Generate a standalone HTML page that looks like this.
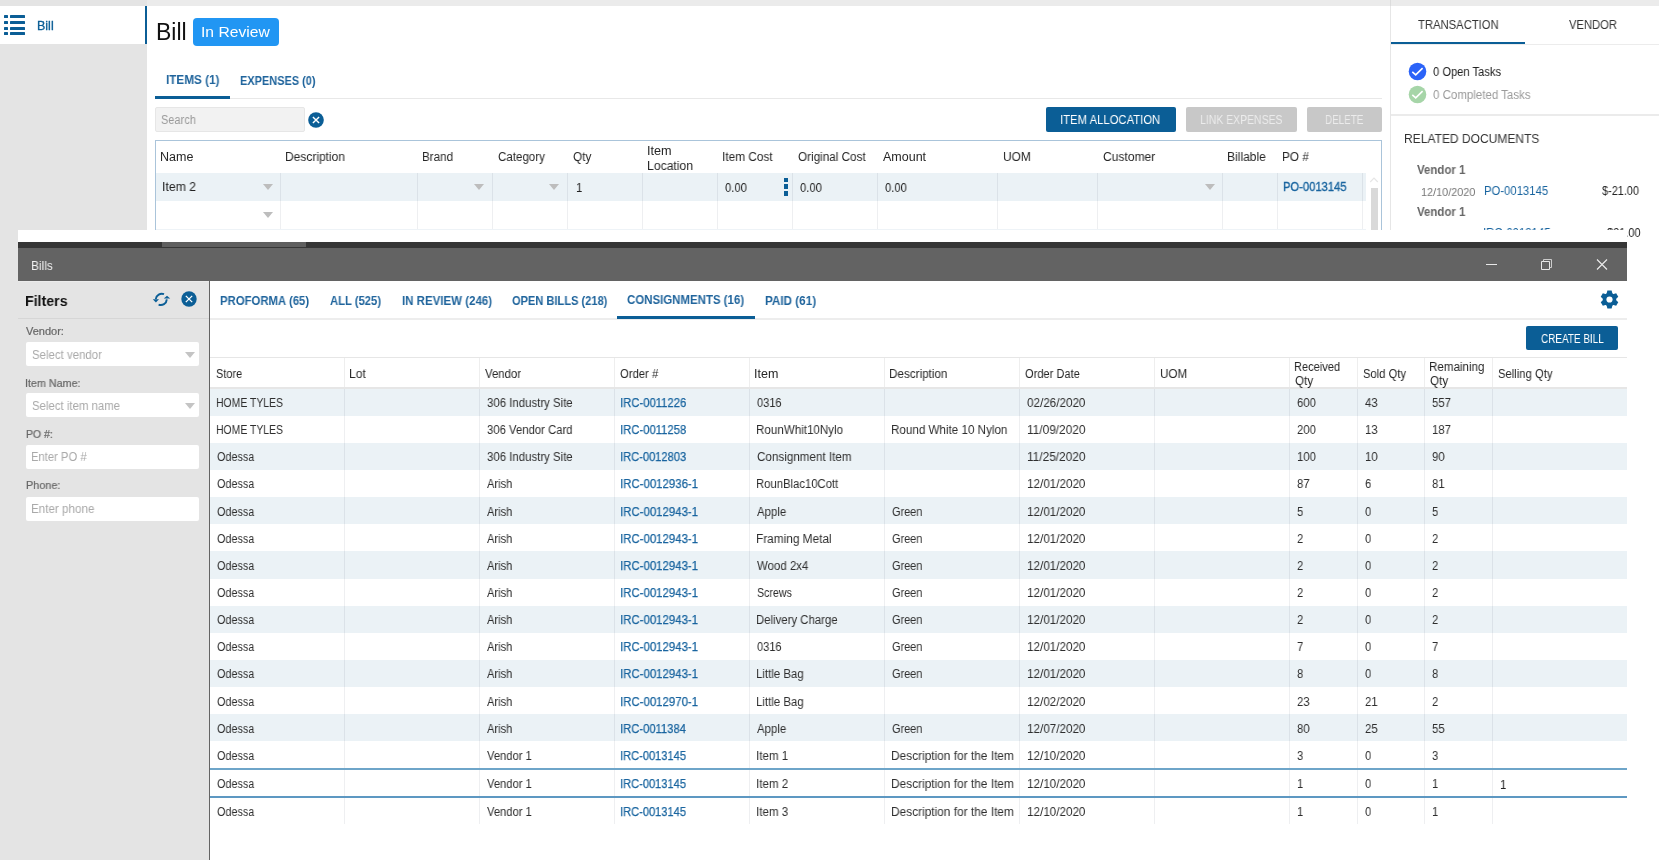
<!DOCTYPE html>
<html><head><meta charset="utf-8"><style>
html,body{margin:0;padding:0;width:1659px;height:860px;overflow:hidden;background:#fff;position:relative}
body{font-family:"Liberation Sans",sans-serif}
.t{position:absolute;white-space:nowrap;transform-origin:0 0;will-change:transform}
.r{position:absolute}
</style></head><body>
<div class="r" style="left:0px;top:0px;width:1659px;height:6px;background:#ebebeb;"></div>
<div class="r" style="left:0px;top:0px;width:147px;height:6px;background:#e4e4e4;"></div>
<div class="r" style="left:0px;top:44px;width:147px;height:816px;background:#e4e4e4;"></div>
<div class="r" style="left:0px;top:6px;width:145px;height:38px;background:#ffffff;"></div>
<div class="r" style="left:145px;top:6px;width:2px;height:38px;background:#0b5e96;"></div>
<div class="r" style="left:4px;top:15px;width:3.5px;height:3px;background:#0b5e96;border-radius:0.5px"></div>
<div class="r" style="left:10px;top:15px;width:14.7px;height:3px;background:#0b5e96;border-radius:0.5px"></div>
<div class="r" style="left:4px;top:21px;width:3.5px;height:3px;background:#0b5e96;border-radius:0.5px"></div>
<div class="r" style="left:10px;top:21px;width:14.7px;height:3px;background:#0b5e96;border-radius:0.5px"></div>
<div class="r" style="left:4px;top:26.5px;width:3.5px;height:3.0px;background:#0b5e96;border-radius:0.5px"></div>
<div class="r" style="left:10px;top:26.5px;width:14.7px;height:3.0px;background:#0b5e96;border-radius:0.5px"></div>
<div class="r" style="left:4px;top:32px;width:3.5px;height:3px;background:#0b5e96;border-radius:0.5px"></div>
<div class="r" style="left:10px;top:32px;width:14.7px;height:3px;background:#0b5e96;border-radius:0.5px"></div>
<div class="t" style="left:36.83px;top:20.22px;font-size:12.5px;line-height:12.5px;font-weight:normal;color:#0b5e96;transform:scaleX(0.9737);-webkit-text-stroke:0.3px #0b5e96">Bill</div>
<div class="t" style="left:155.70px;top:21.03px;font-size:23px;line-height:23px;font-weight:normal;color:#111;">Bill</div>
<div class="r" style="left:193px;top:18px;width:86px;height:28px;background:#2196f3;border-radius:4px"></div>
<div class="t" style="left:200.88px;top:23.85px;font-size:15.3px;line-height:15.3px;font-weight:normal;color:#fff;transform:scaleX(1.0236);">In Review</div>
<div class="t" style="left:165.70px;top:74.16px;font-size:12.8px;line-height:12.8px;font-weight:bold;color:#1f649c;transform:scaleX(0.9167);">ITEMS (1)</div>
<div class="t" style="left:240.00px;top:74.84px;font-size:12px;line-height:12px;font-weight:bold;color:#1f649c;transform:scaleX(0.9130);">EXPENSES (0)</div>
<div class="r" style="left:155px;top:98px;width:1227px;height:1px;background:#e8e8e8;"></div>
<div class="r" style="left:155px;top:96px;width:75px;height:3px;background:#0b5e96;"></div>
<div class="r" style="left:155px;top:107px;width:150px;height:25px;background:#f2f2f2;box-sizing:border-box;border:1px solid #e6e6e6;border-radius:2px"></div>
<div class="t" style="left:161.20px;top:113.52px;font-size:12.5px;line-height:12.5px;font-weight:normal;color:#9a9a9a;transform:scaleX(0.8801);">Search</div>
<svg class="r" style="left:308px;top:112px" width="16" height="16" viewBox="0 0 16 16"><circle cx="8" cy="8" r="7.8" fill="#0b5e96"/><path d="M4.9 4.9L11.1 11.1M11.1 4.9L4.9 11.1" stroke="#fff" stroke-width="1.4"/></svg>
<div class="r" style="left:1046px;top:107px;width:130px;height:25px;background:#0b5e96;border-radius:2px"></div>
<div class="t" style="left:1060.20px;top:113.62px;font-size:12.5px;line-height:12.5px;font-weight:normal;color:#fff;transform:scaleX(0.9036);">ITEM ALLOCATION</div>
<div class="r" style="left:1186px;top:107px;width:111px;height:25px;background:#c8c8c8;border-radius:2px"></div>
<div class="t" style="left:1199.86px;top:113.62px;font-size:12.5px;line-height:12.5px;font-weight:normal;color:#ececec;transform:scaleX(0.8365);">LINK EXPENSES</div>
<div class="r" style="left:1307px;top:107px;width:75px;height:25px;background:#c8c8c8;border-radius:2px"></div>
<div class="t" style="left:1325.41px;top:113.62px;font-size:12.5px;line-height:12.5px;font-weight:normal;color:#ececec;transform:scaleX(0.7888);">DELETE</div>
<div class="r" style="left:155px;top:140px;width:1227px;height:720px;background:#ffffff;box-sizing:border-box;border:1px solid #aac4da"></div>
<div class="r" style="left:156px;top:173px;width:1210px;height:28px;background:#ebf2f6;"></div>
<div class="r" style="left:280px;top:173px;width:1px;height:57px;background:rgba(0,20,40,0.065);"></div>
<div class="r" style="left:417px;top:173px;width:1px;height:57px;background:rgba(0,20,40,0.065);"></div>
<div class="r" style="left:492px;top:173px;width:1px;height:57px;background:rgba(0,20,40,0.065);"></div>
<div class="r" style="left:567px;top:173px;width:1px;height:57px;background:rgba(0,20,40,0.065);"></div>
<div class="r" style="left:642px;top:173px;width:1px;height:57px;background:rgba(0,20,40,0.065);"></div>
<div class="r" style="left:717px;top:173px;width:1px;height:57px;background:rgba(0,20,40,0.065);"></div>
<div class="r" style="left:792px;top:173px;width:1px;height:57px;background:rgba(0,20,40,0.065);"></div>
<div class="r" style="left:877px;top:173px;width:1px;height:57px;background:rgba(0,20,40,0.065);"></div>
<div class="r" style="left:997px;top:173px;width:1px;height:57px;background:rgba(0,20,40,0.065);"></div>
<div class="r" style="left:1097px;top:173px;width:1px;height:57px;background:rgba(0,20,40,0.065);"></div>
<div class="r" style="left:1222px;top:173px;width:1px;height:57px;background:rgba(0,20,40,0.065);"></div>
<div class="r" style="left:1277px;top:173px;width:1px;height:57px;background:rgba(0,20,40,0.065);"></div>
<div class="r" style="left:1362px;top:173px;width:1px;height:57px;background:rgba(0,20,40,0.065);"></div>
<div class="t" style="left:160.01px;top:150.92px;font-size:12.5px;line-height:12.5px;font-weight:normal;color:#262626;transform:scaleX(0.9879);">Name</div>
<div class="t" style="left:285.24px;top:150.92px;font-size:12.5px;line-height:12.5px;font-weight:normal;color:#262626;transform:scaleX(0.9598);">Description</div>
<div class="t" style="left:422.47px;top:150.92px;font-size:12.5px;line-height:12.5px;font-weight:normal;color:#262626;transform:scaleX(0.9289);">Brand</div>
<div class="t" style="left:498.10px;top:150.92px;font-size:12.5px;line-height:12.5px;font-weight:normal;color:#262626;transform:scaleX(0.9248);">Category</div>
<div class="t" style="left:572.80px;top:150.92px;font-size:12.5px;line-height:12.5px;font-weight:normal;color:#262626;transform:scaleX(0.9408);">Qty</div>
<div class="t" style="left:722.25px;top:150.92px;font-size:12.5px;line-height:12.5px;font-weight:normal;color:#262626;transform:scaleX(0.9470);">Item Cost</div>
<div class="t" style="left:798.00px;top:150.92px;font-size:12.5px;line-height:12.5px;font-weight:normal;color:#262626;transform:scaleX(0.9371);">Original Cost</div>
<div class="t" style="left:883.20px;top:150.92px;font-size:12.5px;line-height:12.5px;font-weight:normal;color:#262626;transform:scaleX(0.9953);">Amount</div>
<div class="t" style="left:1003.30px;top:150.92px;font-size:12.5px;line-height:12.5px;font-weight:normal;color:#262626;transform:scaleX(0.9530);">UOM</div>
<div class="t" style="left:1103.00px;top:150.92px;font-size:12.5px;line-height:12.5px;font-weight:normal;color:#262626;transform:scaleX(0.9645);">Customer</div>
<div class="t" style="left:1226.83px;top:150.92px;font-size:12.5px;line-height:12.5px;font-weight:normal;color:#262626;transform:scaleX(0.9657);">Billable</div>
<div class="t" style="left:1282.26px;top:150.92px;font-size:12.5px;line-height:12.5px;font-weight:normal;color:#262626;transform:scaleX(0.9443);">PO #</div>
<div class="t" style="left:647.39px;top:145.42px;font-size:12.5px;line-height:12.5px;font-weight:normal;color:#262626;transform:scaleX(1.0132);">Item</div>
<div class="t" style="left:647.42px;top:159.62px;font-size:12.5px;line-height:12.5px;font-weight:normal;color:#262626;transform:scaleX(0.9761);">Location</div>
<div class="t" style="left:161.72px;top:181.42px;font-size:12.5px;line-height:12.5px;font-weight:normal;color:#222;transform:scaleX(0.9798);">Item 2</div>
<div class="r" style="left:263px;top:184.0px;width:0;height:0;border-left:5px solid transparent;border-right:5px solid transparent;border-top:6px solid #bdbdbd"></div>
<div class="r" style="left:474px;top:184.0px;width:0;height:0;border-left:5px solid transparent;border-right:5px solid transparent;border-top:6px solid #bdbdbd"></div>
<div class="r" style="left:549px;top:184.0px;width:0;height:0;border-left:5px solid transparent;border-right:5px solid transparent;border-top:6px solid #bdbdbd"></div>
<div class="r" style="left:1205px;top:184.0px;width:0;height:0;border-left:5px solid transparent;border-right:5px solid transparent;border-top:6px solid #bdbdbd"></div>
<div class="r" style="left:263px;top:212.0px;width:0;height:0;border-left:5px solid transparent;border-right:5px solid transparent;border-top:6px solid #bdbdbd"></div>
<div class="t" style="left:575.80px;top:182.42px;font-size:12.5px;line-height:12.5px;font-weight:normal;color:#222;transform:scaleX(0.9200);">1</div>
<div class="t" style="left:725.10px;top:182.42px;font-size:12.5px;line-height:12.5px;font-weight:normal;color:#222;transform:scaleX(0.8943);">0.00</div>
<div class="r" style="left:784px;top:177.5px;width:4.2999999999999545px;height:4.5px;background:#0b5e96;"></div>
<div class="r" style="left:784px;top:184.3px;width:4.2999999999999545px;height:4.299999999999983px;background:#0b5e96;"></div>
<div class="r" style="left:784px;top:191px;width:4.2999999999999545px;height:4.599999999999994px;background:#0b5e96;"></div>
<div class="t" style="left:799.70px;top:182.42px;font-size:12.5px;line-height:12.5px;font-weight:normal;color:#222;transform:scaleX(0.8943);">0.00</div>
<div class="t" style="left:885.00px;top:182.42px;font-size:12.5px;line-height:12.5px;font-weight:normal;color:#222;transform:scaleX(0.8902);">0.00</div>
<div class="t" style="left:1282.80px;top:180.72px;font-size:12.5px;line-height:12.5px;font-weight:normal;color:#18649f;transform:scaleX(0.8951);-webkit-text-stroke:0.35px #18649f">PO-0013145</div>
<div class="r" style="left:1366px;top:173px;width:15px;height:57px;background:#ffffff;"></div>
<div class="r" style="left:156px;top:229px;width:1210px;height:1px;background:#eef3f7;"></div>
<svg class="r" style="left:1369px;top:176px" width="10" height="7" viewBox="0 0 10 7"><path d="M1.2 6L5 2.2L8.8 6" stroke="#e6e6e6" stroke-width="1.2" fill="none"/></svg>
<div class="r" style="left:1371px;top:188px;width:7px;height:42px;background:#d9d9d9;"></div>
<div class="r" style="left:1390px;top:0px;width:1px;height:6px;background:#dcdcdc;"></div>
<div class="r" style="left:1390px;top:6px;width:1px;height:224px;background:#e6e6e6;"></div>
<div class="t" style="left:1418.00px;top:19.02px;font-size:12.5px;line-height:12.5px;font-weight:normal;color:#333;transform:scaleX(0.9011);">TRANSACTION</div>
<div class="t" style="left:1568.90px;top:19.02px;font-size:12.5px;line-height:12.5px;font-weight:normal;color:#333;transform:scaleX(0.8961);">VENDOR</div>
<div class="r" style="left:1391px;top:44px;width:268px;height:1px;background:#ececec;"></div>
<div class="r" style="left:1391px;top:42px;width:134px;height:2px;background:#0b5e96;"></div>
<svg class="r" style="left:1408px;top:62px" width="19" height="19" viewBox="0 0 19 19"><circle cx="9.5" cy="9.5" r="8.8" fill="#2b63f8"/><path d="M4.3 9.9L7.7 12.8L14.6 6.2" stroke="#fff" stroke-width="1.6" fill="none"/></svg>
<svg class="r" style="left:1408px;top:85px" width="19" height="19" viewBox="0 0 19 19"><circle cx="9.5" cy="9.5" r="8.8" fill="#a6d5a8"/><path d="M4.3 9.9L7.7 12.8L14.6 6.2" stroke="#fff" stroke-width="1.6" fill="none"/></svg>
<div class="t" style="left:1433.00px;top:65.62px;font-size:12.5px;line-height:12.5px;font-weight:normal;color:#222;transform:scaleX(0.8926);">0 Open Tasks</div>
<div class="t" style="left:1433.00px;top:88.92px;font-size:12.5px;line-height:12.5px;font-weight:normal;color:#9a9a9a;transform:scaleX(0.9203);">0 Completed Tasks</div>
<div class="r" style="left:1391px;top:114px;width:268px;height:2px;background:#ebebeb;"></div>
<div class="t" style="left:1403.61px;top:133.17px;font-size:12.2px;line-height:12.2px;font-weight:normal;color:#333;transform:scaleX(0.9867);">RELATED DOCUMENTS</div>
<div class="t" style="left:1417.20px;top:163.84px;font-size:12px;line-height:12px;font-weight:bold;color:#666;transform:scaleX(0.9547);">Vendor 1</div>
<div class="t" style="left:1420.80px;top:186.30px;font-size:11.7px;line-height:11.7px;font-weight:normal;color:#777;transform:scaleX(0.9289);">12/10/2020</div>
<div class="t" style="left:1483.70px;top:185.24px;font-size:12px;line-height:12px;font-weight:normal;color:#18649f;transform:scaleX(0.9418);">PO-0013145</div>
<div class="t" style="left:1602.40px;top:185.24px;font-size:12px;line-height:12px;font-weight:normal;color:#222;transform:scaleX(0.9092);">$-21.00</div>
<div class="t" style="left:1417.20px;top:205.54px;font-size:12px;line-height:12px;font-weight:bold;color:#666;transform:scaleX(0.9547);">Vendor 1</div>
<div class="t" style="left:1482.75px;top:227.34px;font-size:12px;line-height:12px;font-weight:normal;color:#18649f;transform:scaleX(0.9460);">IRC-0013145</div>
<div class="t" style="left:1606.60px;top:226.84px;font-size:12px;line-height:12px;font-weight:normal;color:#222;transform:scaleX(0.9160);">$21.00</div>
<div class="r" style="left:18px;top:230px;width:1609px;height:12px;background:#ffffff;"></div>
<div class="r" style="left:0px;top:242px;width:18px;height:618px;background:#e4e4e4;"></div>
<div class="r" style="left:18px;top:242px;width:1609px;height:6px;background:#363636;"></div>
<div class="r" style="left:162px;top:242px;width:144px;height:5px;background:#5f5f5f;"></div>
<div class="r" style="left:18px;top:248px;width:1609px;height:33px;background:#636363;"></div>
<div class="t" style="left:31.38px;top:259.20px;font-size:13px;line-height:13px;font-weight:normal;color:#f2f2f2;transform:scaleX(0.9171);">Bills</div>
<div class="r" style="left:1486px;top:264px;width:11px;height:1px;background:#e8e8e8;"></div>
<svg class="r" style="left:1540px;top:258px" width="14" height="13" viewBox="0 0 14 13"><path d="M1.5 3.5H9.5V11.5H1.5Z" stroke="#e8e8e8" stroke-width="1" fill="none"/><path d="M3.5 3.5V1.5H11.5V9.5H9.5" stroke="#d8d8d8" stroke-width="0.9" fill="none"/></svg>
<svg class="r" style="left:1596px;top:259px" width="12" height="11" viewBox="0 0 12 11"><path d="M1 0.5L11 10.5M11 0.5L1 10.5" stroke="#ececec" stroke-width="1.1"/></svg>
<div class="r" style="left:18px;top:281px;width:1609px;height:579px;background:#ffffff;"></div>
<div class="r" style="left:0px;top:281px;width:209px;height:579px;background:#e4e4e4;"></div>
<div class="r" style="left:18px;top:281px;width:191px;height:1px;background:#ebebeb;"></div>
<div class="r" style="left:209px;top:281px;width:1px;height:579px;background:#646464;"></div>
<div class="t" style="left:25.05px;top:292.60px;font-size:15px;line-height:15px;font-weight:bold;color:#111;transform:scaleX(0.9457);">Filters</div>
<svg class="r" style="left:148px;top:286px" width="26" height="22" viewBox="0 0 26 22"><g fill="none" stroke="#0b5e96" stroke-width="1.9"><path d="M16 8.2A6 6 0 0 0 7.8 13"/><path d="M10.6 18.6A6 6 0 0 0 18.8 13.4"/></g><g fill="#0b5e96"><path d="M4.8 13.2H11L7.9 16.4Z"/><path d="M15.8 12.6H22.2L19 9.8Z"/></g></svg>
<svg class="r" style="left:180.7px;top:291.2px" width="16" height="16" viewBox="0 0 16 16"><circle cx="8" cy="8" r="7.7" fill="#0b5e96"/><path d="M4.8 4.9L11.2 11.1M11.2 4.9L4.8 11.1" stroke="#fff" stroke-width="1.3"/></svg>
<div class="r" style="left:18px;top:318px;width:191px;height:1px;background:#d6d6d6;"></div>
<div class="t" style="left:26.00px;top:325.89px;font-size:11px;line-height:11px;font-weight:normal;color:#666;-webkit-text-stroke:0.2px #666">Vendor:</div>
<div class="r" style="left:26px;top:342px;width:173px;height:24px;background:#ffffff;border-radius:2px"></div>
<div class="t" style="left:31.50px;top:348.52px;font-size:12.5px;line-height:12.5px;font-weight:normal;color:#a9a9a9;transform:scaleX(0.9151);">Select vendor</div>
<div class="r" style="left:185px;top:352.0px;width:0;height:0;border-left:5px solid transparent;border-right:5px solid transparent;border-top:6px solid #c4c4c4"></div>
<div class="t" style="left:25.02px;top:377.69px;font-size:11px;line-height:11px;font-weight:normal;color:#666;transform:scaleX(0.9751);-webkit-text-stroke:0.2px #666">Item Name:</div>
<div class="r" style="left:26px;top:393px;width:173px;height:24px;background:#ffffff;border-radius:2px"></div>
<div class="t" style="left:31.50px;top:399.72px;font-size:12.5px;line-height:12.5px;font-weight:normal;color:#a9a9a9;transform:scaleX(0.9118);">Select item name</div>
<div class="r" style="left:185px;top:403.0px;width:0;height:0;border-left:5px solid transparent;border-right:5px solid transparent;border-top:6px solid #c4c4c4"></div>
<div class="t" style="left:26.00px;top:429.19px;font-size:11px;line-height:11px;font-weight:normal;color:#666;transform:scaleX(0.9513);-webkit-text-stroke:0.2px #666">PO #:</div>
<div class="r" style="left:26px;top:445px;width:173px;height:24px;background:#ffffff;border-radius:2px"></div>
<div class="t" style="left:30.60px;top:451.12px;font-size:12.5px;line-height:12.5px;font-weight:normal;color:#a9a9a9;transform:scaleX(0.8984);">Enter PO #</div>
<div class="t" style="left:26.00px;top:480.09px;font-size:11px;line-height:11px;font-weight:normal;color:#666;transform:scaleX(0.9854);-webkit-text-stroke:0.2px #666">Phone:</div>
<div class="r" style="left:26px;top:497px;width:173px;height:24px;background:#ffffff;border-radius:2px"></div>
<div class="t" style="left:30.57px;top:502.92px;font-size:12.5px;line-height:12.5px;font-weight:normal;color:#a9a9a9;transform:scaleX(0.9307);">Enter phone</div>
<div class="t" style="left:220.10px;top:294.74px;font-size:12px;line-height:12px;font-weight:bold;color:#1f649c;transform:scaleX(0.9454);">PROFORMA (65)</div>
<div class="t" style="left:329.50px;top:294.74px;font-size:12px;line-height:12px;font-weight:bold;color:#1f649c;transform:scaleX(0.9364);">ALL (525)</div>
<div class="t" style="left:401.50px;top:294.74px;font-size:12px;line-height:12px;font-weight:bold;color:#1f649c;transform:scaleX(0.9583);">IN REVIEW (246)</div>
<div class="t" style="left:511.60px;top:294.74px;font-size:12px;line-height:12px;font-weight:bold;color:#1f649c;transform:scaleX(0.9230);">OPEN BILLS (218)</div>
<div class="t" style="left:627.30px;top:294.04px;font-size:12px;line-height:12px;font-weight:bold;color:#1f649c;transform:scaleX(0.9545);">CONSIGNMENTS (16)</div>
<div class="t" style="left:764.60px;top:294.74px;font-size:12px;line-height:12px;font-weight:bold;color:#1f649c;transform:scaleX(0.9741);">PAID (61)</div>
<div class="r" style="left:210px;top:318px;width:1417px;height:2px;background:#ededed;"></div>
<div class="r" style="left:617px;top:316px;width:138px;height:3px;background:#0b5e96;"></div>
<svg class="r" style="left:1599.6px;top:290.1px" width="19" height="19" viewBox="-9.5 -9.5 19 19"><g fill="#0b5e96"><circle r="6.7"/><path d="M-2.1 -8.9L2.1 -8.9L3 -5.5L-3 -5.5Z" transform="rotate(0)"/><path d="M-2.1 -8.9L2.1 -8.9L3 -5.5L-3 -5.5Z" transform="rotate(60)"/><path d="M-2.1 -8.9L2.1 -8.9L3 -5.5L-3 -5.5Z" transform="rotate(120)"/><path d="M-2.1 -8.9L2.1 -8.9L3 -5.5L-3 -5.5Z" transform="rotate(180)"/><path d="M-2.1 -8.9L2.1 -8.9L3 -5.5L-3 -5.5Z" transform="rotate(240)"/><path d="M-2.1 -8.9L2.1 -8.9L3 -5.5L-3 -5.5Z" transform="rotate(300)"/></g><circle r="3.1" fill="#fff"/></svg>
<div class="r" style="left:1526px;top:326px;width:92px;height:24px;background:#0b5e96;border-radius:2px"></div>
<div class="t" style="left:1540.50px;top:332.72px;font-size:12.5px;line-height:12.5px;font-weight:normal;color:#fff;transform:scaleX(0.7948);">CREATE BILL</div>
<div class="r" style="left:210px;top:357px;width:1417px;height:1px;background:#e6e6e6;"></div>
<div class="r" style="left:210px;top:387px;width:1417px;height:2px;background:#e6e6e6;"></div>
<div class="t" style="left:215.50px;top:368.42px;font-size:12.5px;line-height:12.5px;font-weight:normal;color:#262626;transform:scaleX(0.8755);">Store</div>
<div class="t" style="left:348.54px;top:368.42px;font-size:12.5px;line-height:12.5px;font-weight:normal;color:#262626;transform:scaleX(0.9643);">Lot</div>
<div class="t" style="left:484.50px;top:368.42px;font-size:12.5px;line-height:12.5px;font-weight:normal;color:#262626;transform:scaleX(0.9099);">Vendor</div>
<div class="t" style="left:619.50px;top:368.42px;font-size:12.5px;line-height:12.5px;font-weight:normal;color:#262626;transform:scaleX(0.9028);">Order #</div>
<div class="t" style="left:753.50px;top:368.42px;font-size:12.5px;line-height:12.5px;font-weight:normal;color:#262626;transform:scaleX(0.9957);">Item</div>
<div class="t" style="left:888.56px;top:368.42px;font-size:12.5px;line-height:12.5px;font-weight:normal;color:#262626;transform:scaleX(0.9355);">Description</div>
<div class="t" style="left:1024.50px;top:368.42px;font-size:12.5px;line-height:12.5px;font-weight:normal;color:#262626;transform:scaleX(0.8856);">Order Date</div>
<div class="t" style="left:1159.50px;top:368.42px;font-size:12.5px;line-height:12.5px;font-weight:normal;color:#262626;transform:scaleX(0.9322);">UOM</div>
<div class="t" style="left:1362.50px;top:368.42px;font-size:12.5px;line-height:12.5px;font-weight:normal;color:#262626;transform:scaleX(0.8976);">Sold Qty</div>
<div class="t" style="left:1497.50px;top:368.42px;font-size:12.5px;line-height:12.5px;font-weight:normal;color:#262626;transform:scaleX(0.9021);">Selling Qty</div>
<div class="t" style="left:1294.12px;top:360.72px;font-size:12.5px;line-height:12.5px;font-weight:normal;color:#262626;transform:scaleX(0.8835);">Received</div>
<div class="t" style="left:1295.00px;top:374.92px;font-size:12.5px;line-height:12.5px;font-weight:normal;color:#262626;transform:scaleX(0.9300);">Qty</div>
<div class="t" style="left:1429.07px;top:360.72px;font-size:12.5px;line-height:12.5px;font-weight:normal;color:#262626;transform:scaleX(0.9285);">Remaining</div>
<div class="t" style="left:1430.00px;top:374.92px;font-size:12.5px;line-height:12.5px;font-weight:normal;color:#262626;transform:scaleX(0.9300);">Qty</div>
<div class="r" style="left:344px;top:358px;width:1px;height:29px;background:#eeeeee;"></div>
<div class="r" style="left:479px;top:358px;width:1px;height:29px;background:#eeeeee;"></div>
<div class="r" style="left:614px;top:358px;width:1px;height:29px;background:#eeeeee;"></div>
<div class="r" style="left:749px;top:358px;width:1px;height:29px;background:#eeeeee;"></div>
<div class="r" style="left:884px;top:358px;width:1px;height:29px;background:#eeeeee;"></div>
<div class="r" style="left:1019px;top:358px;width:1px;height:29px;background:#eeeeee;"></div>
<div class="r" style="left:1154px;top:358px;width:1px;height:29px;background:#eeeeee;"></div>
<div class="r" style="left:1289px;top:358px;width:1px;height:29px;background:#eeeeee;"></div>
<div class="r" style="left:1357px;top:358px;width:1px;height:29px;background:#eeeeee;"></div>
<div class="r" style="left:1424px;top:358px;width:1px;height:29px;background:#eeeeee;"></div>
<div class="r" style="left:1492px;top:358px;width:1px;height:29px;background:#eeeeee;"></div>
<div class="r" style="left:210px;top:389px;width:1417px;height:27px;background:#ebf2f6;"></div>
<div class="r" style="left:344px;top:389px;width:1px;height:27px;background:rgba(0,20,40,0.065);"></div>
<div class="r" style="left:479px;top:389px;width:1px;height:27px;background:rgba(0,20,40,0.065);"></div>
<div class="r" style="left:614px;top:389px;width:1px;height:27px;background:rgba(0,20,40,0.065);"></div>
<div class="r" style="left:749px;top:389px;width:1px;height:27px;background:rgba(0,20,40,0.065);"></div>
<div class="r" style="left:884px;top:389px;width:1px;height:27px;background:rgba(0,20,40,0.065);"></div>
<div class="r" style="left:1019px;top:389px;width:1px;height:27px;background:rgba(0,20,40,0.065);"></div>
<div class="r" style="left:1154px;top:389px;width:1px;height:27px;background:rgba(0,20,40,0.065);"></div>
<div class="r" style="left:1289px;top:389px;width:1px;height:27px;background:rgba(0,20,40,0.065);"></div>
<div class="r" style="left:1357px;top:389px;width:1px;height:27px;background:rgba(0,20,40,0.065);"></div>
<div class="r" style="left:1424px;top:389px;width:1px;height:27px;background:rgba(0,20,40,0.065);"></div>
<div class="r" style="left:1492px;top:389px;width:1px;height:27px;background:rgba(0,20,40,0.065);"></div>
<div class="t" style="left:216.07px;top:396.72px;font-size:12.5px;line-height:12.5px;font-weight:normal;color:#2e2e2e;transform:scaleX(0.8330);">HOME TYLES</div>
<div class="t" style="left:486.60px;top:396.72px;font-size:12.5px;line-height:12.5px;font-weight:normal;color:#2e2e2e;transform:scaleX(0.9131);">306 Industry Site</div>
<div class="t" style="left:619.60px;top:396.72px;font-size:12.5px;line-height:12.5px;font-weight:normal;color:#18649f;transform:scaleX(0.9024);-webkit-text-stroke:0.25px #18649f">IRC-0011226</div>
<div class="t" style="left:756.60px;top:396.72px;font-size:12.5px;line-height:12.5px;font-weight:normal;color:#2e2e2e;transform:scaleX(0.8831);">0316</div>
<div class="t" style="left:1026.60px;top:396.72px;font-size:12.5px;line-height:12.5px;font-weight:normal;color:#2e2e2e;transform:scaleX(0.9344);">02/26/2020</div>
<div class="t" style="left:1296.60px;top:396.72px;font-size:12.5px;line-height:12.5px;font-weight:normal;color:#2e2e2e;transform:scaleX(0.9050);">600</div>
<div class="t" style="left:1364.60px;top:396.72px;font-size:12.5px;line-height:12.5px;font-weight:normal;color:#2e2e2e;transform:scaleX(0.9050);">43</div>
<div class="t" style="left:1431.60px;top:396.72px;font-size:12.5px;line-height:12.5px;font-weight:normal;color:#2e2e2e;transform:scaleX(0.9050);">557</div>
<div class="r" style="left:344px;top:416px;width:1px;height:27px;background:rgba(0,20,40,0.065);"></div>
<div class="r" style="left:479px;top:416px;width:1px;height:27px;background:rgba(0,20,40,0.065);"></div>
<div class="r" style="left:614px;top:416px;width:1px;height:27px;background:rgba(0,20,40,0.065);"></div>
<div class="r" style="left:749px;top:416px;width:1px;height:27px;background:rgba(0,20,40,0.065);"></div>
<div class="r" style="left:884px;top:416px;width:1px;height:27px;background:rgba(0,20,40,0.065);"></div>
<div class="r" style="left:1019px;top:416px;width:1px;height:27px;background:rgba(0,20,40,0.065);"></div>
<div class="r" style="left:1154px;top:416px;width:1px;height:27px;background:rgba(0,20,40,0.065);"></div>
<div class="r" style="left:1289px;top:416px;width:1px;height:27px;background:rgba(0,20,40,0.065);"></div>
<div class="r" style="left:1357px;top:416px;width:1px;height:27px;background:rgba(0,20,40,0.065);"></div>
<div class="r" style="left:1424px;top:416px;width:1px;height:27px;background:rgba(0,20,40,0.065);"></div>
<div class="r" style="left:1492px;top:416px;width:1px;height:27px;background:rgba(0,20,40,0.065);"></div>
<div class="t" style="left:216.07px;top:423.72px;font-size:12.5px;line-height:12.5px;font-weight:normal;color:#2e2e2e;transform:scaleX(0.8330);">HOME TYLES</div>
<div class="t" style="left:486.60px;top:423.72px;font-size:12.5px;line-height:12.5px;font-weight:normal;color:#2e2e2e;transform:scaleX(0.9050);">306 Vendor Card</div>
<div class="t" style="left:619.60px;top:423.72px;font-size:12.5px;line-height:12.5px;font-weight:normal;color:#18649f;transform:scaleX(0.9024);-webkit-text-stroke:0.25px #18649f">IRC-0011258</div>
<div class="t" style="left:755.67px;top:423.72px;font-size:12.5px;line-height:12.5px;font-weight:normal;color:#2e2e2e;transform:scaleX(0.9285);">RounWhit10Nylo</div>
<div class="t" style="left:890.67px;top:423.72px;font-size:12.5px;line-height:12.5px;font-weight:normal;color:#2e2e2e;transform:scaleX(0.9306);">Round White 10 Nylon</div>
<div class="t" style="left:1026.60px;top:423.72px;font-size:12.5px;line-height:12.5px;font-weight:normal;color:#2e2e2e;transform:scaleX(0.9484);">11/09/2020</div>
<div class="t" style="left:1296.60px;top:423.72px;font-size:12.5px;line-height:12.5px;font-weight:normal;color:#2e2e2e;transform:scaleX(0.9050);">200</div>
<div class="t" style="left:1364.60px;top:423.72px;font-size:12.5px;line-height:12.5px;font-weight:normal;color:#2e2e2e;transform:scaleX(0.9050);">13</div>
<div class="t" style="left:1431.60px;top:423.72px;font-size:12.5px;line-height:12.5px;font-weight:normal;color:#2e2e2e;transform:scaleX(0.9050);">187</div>
<div class="r" style="left:210px;top:443px;width:1417px;height:27px;background:#ebf2f6;"></div>
<div class="r" style="left:344px;top:443px;width:1px;height:27px;background:rgba(0,20,40,0.065);"></div>
<div class="r" style="left:479px;top:443px;width:1px;height:27px;background:rgba(0,20,40,0.065);"></div>
<div class="r" style="left:614px;top:443px;width:1px;height:27px;background:rgba(0,20,40,0.065);"></div>
<div class="r" style="left:749px;top:443px;width:1px;height:27px;background:rgba(0,20,40,0.065);"></div>
<div class="r" style="left:884px;top:443px;width:1px;height:27px;background:rgba(0,20,40,0.065);"></div>
<div class="r" style="left:1019px;top:443px;width:1px;height:27px;background:rgba(0,20,40,0.065);"></div>
<div class="r" style="left:1154px;top:443px;width:1px;height:27px;background:rgba(0,20,40,0.065);"></div>
<div class="r" style="left:1289px;top:443px;width:1px;height:27px;background:rgba(0,20,40,0.065);"></div>
<div class="r" style="left:1357px;top:443px;width:1px;height:27px;background:rgba(0,20,40,0.065);"></div>
<div class="r" style="left:1424px;top:443px;width:1px;height:27px;background:rgba(0,20,40,0.065);"></div>
<div class="r" style="left:1492px;top:443px;width:1px;height:27px;background:rgba(0,20,40,0.065);"></div>
<div class="t" style="left:216.90px;top:450.72px;font-size:12.5px;line-height:12.5px;font-weight:normal;color:#2e2e2e;transform:scaleX(0.8626);">Odessa</div>
<div class="t" style="left:486.60px;top:450.72px;font-size:12.5px;line-height:12.5px;font-weight:normal;color:#2e2e2e;transform:scaleX(0.9131);">306 Industry Site</div>
<div class="t" style="left:619.61px;top:450.72px;font-size:12.5px;line-height:12.5px;font-weight:normal;color:#18649f;transform:scaleX(0.8896);-webkit-text-stroke:0.25px #18649f">IRC-0012803</div>
<div class="t" style="left:756.60px;top:450.72px;font-size:12.5px;line-height:12.5px;font-weight:normal;color:#2e2e2e;transform:scaleX(0.9325);">Consignment Item</div>
<div class="t" style="left:1026.60px;top:450.72px;font-size:12.5px;line-height:12.5px;font-weight:normal;color:#2e2e2e;transform:scaleX(0.9484);">11/25/2020</div>
<div class="t" style="left:1296.60px;top:450.72px;font-size:12.5px;line-height:12.5px;font-weight:normal;color:#2e2e2e;transform:scaleX(0.9050);">100</div>
<div class="t" style="left:1364.60px;top:450.72px;font-size:12.5px;line-height:12.5px;font-weight:normal;color:#2e2e2e;transform:scaleX(0.9050);">10</div>
<div class="t" style="left:1431.60px;top:450.72px;font-size:12.5px;line-height:12.5px;font-weight:normal;color:#2e2e2e;transform:scaleX(0.9050);">90</div>
<div class="r" style="left:344px;top:470px;width:1px;height:27px;background:rgba(0,20,40,0.065);"></div>
<div class="r" style="left:479px;top:470px;width:1px;height:27px;background:rgba(0,20,40,0.065);"></div>
<div class="r" style="left:614px;top:470px;width:1px;height:27px;background:rgba(0,20,40,0.065);"></div>
<div class="r" style="left:749px;top:470px;width:1px;height:27px;background:rgba(0,20,40,0.065);"></div>
<div class="r" style="left:884px;top:470px;width:1px;height:27px;background:rgba(0,20,40,0.065);"></div>
<div class="r" style="left:1019px;top:470px;width:1px;height:27px;background:rgba(0,20,40,0.065);"></div>
<div class="r" style="left:1154px;top:470px;width:1px;height:27px;background:rgba(0,20,40,0.065);"></div>
<div class="r" style="left:1289px;top:470px;width:1px;height:27px;background:rgba(0,20,40,0.065);"></div>
<div class="r" style="left:1357px;top:470px;width:1px;height:27px;background:rgba(0,20,40,0.065);"></div>
<div class="r" style="left:1424px;top:470px;width:1px;height:27px;background:rgba(0,20,40,0.065);"></div>
<div class="r" style="left:1492px;top:470px;width:1px;height:27px;background:rgba(0,20,40,0.065);"></div>
<div class="t" style="left:216.90px;top:477.72px;font-size:12.5px;line-height:12.5px;font-weight:normal;color:#2e2e2e;transform:scaleX(0.8626);">Odessa</div>
<div class="t" style="left:486.60px;top:477.72px;font-size:12.5px;line-height:12.5px;font-weight:normal;color:#2e2e2e;transform:scaleX(0.8904);">Arish</div>
<div class="t" style="left:619.59px;top:477.72px;font-size:12.5px;line-height:12.5px;font-weight:normal;color:#18649f;transform:scaleX(0.9134);-webkit-text-stroke:0.25px #18649f">IRC-0012936-1</div>
<div class="t" style="left:755.70px;top:477.72px;font-size:12.5px;line-height:12.5px;font-weight:normal;color:#2e2e2e;transform:scaleX(0.9033);">RounBlac10Cott</div>
<div class="t" style="left:1026.60px;top:477.72px;font-size:12.5px;line-height:12.5px;font-weight:normal;color:#2e2e2e;transform:scaleX(0.9344);">12/01/2020</div>
<div class="t" style="left:1296.60px;top:477.72px;font-size:12.5px;line-height:12.5px;font-weight:normal;color:#2e2e2e;transform:scaleX(0.9050);">87</div>
<div class="t" style="left:1364.60px;top:477.72px;font-size:12.5px;line-height:12.5px;font-weight:normal;color:#2e2e2e;transform:scaleX(0.9050);">6</div>
<div class="t" style="left:1431.60px;top:477.72px;font-size:12.5px;line-height:12.5px;font-weight:normal;color:#2e2e2e;transform:scaleX(0.9050);">81</div>
<div class="r" style="left:210px;top:497px;width:1417px;height:27px;background:#ebf2f6;"></div>
<div class="r" style="left:344px;top:497px;width:1px;height:27px;background:rgba(0,20,40,0.065);"></div>
<div class="r" style="left:479px;top:497px;width:1px;height:27px;background:rgba(0,20,40,0.065);"></div>
<div class="r" style="left:614px;top:497px;width:1px;height:27px;background:rgba(0,20,40,0.065);"></div>
<div class="r" style="left:749px;top:497px;width:1px;height:27px;background:rgba(0,20,40,0.065);"></div>
<div class="r" style="left:884px;top:497px;width:1px;height:27px;background:rgba(0,20,40,0.065);"></div>
<div class="r" style="left:1019px;top:497px;width:1px;height:27px;background:rgba(0,20,40,0.065);"></div>
<div class="r" style="left:1154px;top:497px;width:1px;height:27px;background:rgba(0,20,40,0.065);"></div>
<div class="r" style="left:1289px;top:497px;width:1px;height:27px;background:rgba(0,20,40,0.065);"></div>
<div class="r" style="left:1357px;top:497px;width:1px;height:27px;background:rgba(0,20,40,0.065);"></div>
<div class="r" style="left:1424px;top:497px;width:1px;height:27px;background:rgba(0,20,40,0.065);"></div>
<div class="r" style="left:1492px;top:497px;width:1px;height:27px;background:rgba(0,20,40,0.065);"></div>
<div class="t" style="left:216.90px;top:505.72px;font-size:12.5px;line-height:12.5px;font-weight:normal;color:#2e2e2e;transform:scaleX(0.8626);">Odessa</div>
<div class="t" style="left:486.60px;top:505.72px;font-size:12.5px;line-height:12.5px;font-weight:normal;color:#2e2e2e;transform:scaleX(0.8904);">Arish</div>
<div class="t" style="left:619.59px;top:505.72px;font-size:12.5px;line-height:12.5px;font-weight:normal;color:#18649f;transform:scaleX(0.9134);-webkit-text-stroke:0.25px #18649f">IRC-0012943-1</div>
<div class="t" style="left:756.60px;top:505.72px;font-size:12.5px;line-height:12.5px;font-weight:normal;color:#2e2e2e;transform:scaleX(0.9151);">Apple</div>
<div class="t" style="left:891.60px;top:505.72px;font-size:12.5px;line-height:12.5px;font-weight:normal;color:#2e2e2e;transform:scaleX(0.8738);">Green</div>
<div class="t" style="left:1026.60px;top:505.72px;font-size:12.5px;line-height:12.5px;font-weight:normal;color:#2e2e2e;transform:scaleX(0.9344);">12/01/2020</div>
<div class="t" style="left:1296.60px;top:505.72px;font-size:12.5px;line-height:12.5px;font-weight:normal;color:#2e2e2e;transform:scaleX(0.9050);">5</div>
<div class="t" style="left:1364.60px;top:505.72px;font-size:12.5px;line-height:12.5px;font-weight:normal;color:#2e2e2e;transform:scaleX(0.9050);">0</div>
<div class="t" style="left:1431.60px;top:505.72px;font-size:12.5px;line-height:12.5px;font-weight:normal;color:#2e2e2e;transform:scaleX(0.9050);">5</div>
<div class="r" style="left:344px;top:524px;width:1px;height:27px;background:rgba(0,20,40,0.065);"></div>
<div class="r" style="left:479px;top:524px;width:1px;height:27px;background:rgba(0,20,40,0.065);"></div>
<div class="r" style="left:614px;top:524px;width:1px;height:27px;background:rgba(0,20,40,0.065);"></div>
<div class="r" style="left:749px;top:524px;width:1px;height:27px;background:rgba(0,20,40,0.065);"></div>
<div class="r" style="left:884px;top:524px;width:1px;height:27px;background:rgba(0,20,40,0.065);"></div>
<div class="r" style="left:1019px;top:524px;width:1px;height:27px;background:rgba(0,20,40,0.065);"></div>
<div class="r" style="left:1154px;top:524px;width:1px;height:27px;background:rgba(0,20,40,0.065);"></div>
<div class="r" style="left:1289px;top:524px;width:1px;height:27px;background:rgba(0,20,40,0.065);"></div>
<div class="r" style="left:1357px;top:524px;width:1px;height:27px;background:rgba(0,20,40,0.065);"></div>
<div class="r" style="left:1424px;top:524px;width:1px;height:27px;background:rgba(0,20,40,0.065);"></div>
<div class="r" style="left:1492px;top:524px;width:1px;height:27px;background:rgba(0,20,40,0.065);"></div>
<div class="t" style="left:216.90px;top:532.72px;font-size:12.5px;line-height:12.5px;font-weight:normal;color:#2e2e2e;transform:scaleX(0.8626);">Odessa</div>
<div class="t" style="left:486.60px;top:532.72px;font-size:12.5px;line-height:12.5px;font-weight:normal;color:#2e2e2e;transform:scaleX(0.8904);">Arish</div>
<div class="t" style="left:619.59px;top:532.72px;font-size:12.5px;line-height:12.5px;font-weight:normal;color:#18649f;transform:scaleX(0.9134);-webkit-text-stroke:0.25px #18649f">IRC-0012943-1</div>
<div class="t" style="left:755.65px;top:532.72px;font-size:12.5px;line-height:12.5px;font-weight:normal;color:#2e2e2e;transform:scaleX(0.9462);">Framing Metal</div>
<div class="t" style="left:891.60px;top:532.72px;font-size:12.5px;line-height:12.5px;font-weight:normal;color:#2e2e2e;transform:scaleX(0.8738);">Green</div>
<div class="t" style="left:1026.60px;top:532.72px;font-size:12.5px;line-height:12.5px;font-weight:normal;color:#2e2e2e;transform:scaleX(0.9344);">12/01/2020</div>
<div class="t" style="left:1296.60px;top:532.72px;font-size:12.5px;line-height:12.5px;font-weight:normal;color:#2e2e2e;transform:scaleX(0.9050);">2</div>
<div class="t" style="left:1364.60px;top:532.72px;font-size:12.5px;line-height:12.5px;font-weight:normal;color:#2e2e2e;transform:scaleX(0.9050);">0</div>
<div class="t" style="left:1431.60px;top:532.72px;font-size:12.5px;line-height:12.5px;font-weight:normal;color:#2e2e2e;transform:scaleX(0.9050);">2</div>
<div class="r" style="left:210px;top:551px;width:1417px;height:28px;background:#ebf2f6;"></div>
<div class="r" style="left:344px;top:551px;width:1px;height:28px;background:rgba(0,20,40,0.065);"></div>
<div class="r" style="left:479px;top:551px;width:1px;height:28px;background:rgba(0,20,40,0.065);"></div>
<div class="r" style="left:614px;top:551px;width:1px;height:28px;background:rgba(0,20,40,0.065);"></div>
<div class="r" style="left:749px;top:551px;width:1px;height:28px;background:rgba(0,20,40,0.065);"></div>
<div class="r" style="left:884px;top:551px;width:1px;height:28px;background:rgba(0,20,40,0.065);"></div>
<div class="r" style="left:1019px;top:551px;width:1px;height:28px;background:rgba(0,20,40,0.065);"></div>
<div class="r" style="left:1154px;top:551px;width:1px;height:28px;background:rgba(0,20,40,0.065);"></div>
<div class="r" style="left:1289px;top:551px;width:1px;height:28px;background:rgba(0,20,40,0.065);"></div>
<div class="r" style="left:1357px;top:551px;width:1px;height:28px;background:rgba(0,20,40,0.065);"></div>
<div class="r" style="left:1424px;top:551px;width:1px;height:28px;background:rgba(0,20,40,0.065);"></div>
<div class="r" style="left:1492px;top:551px;width:1px;height:28px;background:rgba(0,20,40,0.065);"></div>
<div class="t" style="left:216.90px;top:559.72px;font-size:12.5px;line-height:12.5px;font-weight:normal;color:#2e2e2e;transform:scaleX(0.8626);">Odessa</div>
<div class="t" style="left:486.60px;top:559.72px;font-size:12.5px;line-height:12.5px;font-weight:normal;color:#2e2e2e;transform:scaleX(0.8904);">Arish</div>
<div class="t" style="left:619.59px;top:559.72px;font-size:12.5px;line-height:12.5px;font-weight:normal;color:#18649f;transform:scaleX(0.9134);-webkit-text-stroke:0.25px #18649f">IRC-0012943-1</div>
<div class="t" style="left:756.60px;top:559.72px;font-size:12.5px;line-height:12.5px;font-weight:normal;color:#2e2e2e;transform:scaleX(0.9162);">Wood 2x4</div>
<div class="t" style="left:891.60px;top:559.72px;font-size:12.5px;line-height:12.5px;font-weight:normal;color:#2e2e2e;transform:scaleX(0.8738);">Green</div>
<div class="t" style="left:1026.60px;top:559.72px;font-size:12.5px;line-height:12.5px;font-weight:normal;color:#2e2e2e;transform:scaleX(0.9344);">12/01/2020</div>
<div class="t" style="left:1296.60px;top:559.72px;font-size:12.5px;line-height:12.5px;font-weight:normal;color:#2e2e2e;transform:scaleX(0.9050);">2</div>
<div class="t" style="left:1364.60px;top:559.72px;font-size:12.5px;line-height:12.5px;font-weight:normal;color:#2e2e2e;transform:scaleX(0.9050);">0</div>
<div class="t" style="left:1431.60px;top:559.72px;font-size:12.5px;line-height:12.5px;font-weight:normal;color:#2e2e2e;transform:scaleX(0.9050);">2</div>
<div class="r" style="left:344px;top:579px;width:1px;height:27px;background:rgba(0,20,40,0.065);"></div>
<div class="r" style="left:479px;top:579px;width:1px;height:27px;background:rgba(0,20,40,0.065);"></div>
<div class="r" style="left:614px;top:579px;width:1px;height:27px;background:rgba(0,20,40,0.065);"></div>
<div class="r" style="left:749px;top:579px;width:1px;height:27px;background:rgba(0,20,40,0.065);"></div>
<div class="r" style="left:884px;top:579px;width:1px;height:27px;background:rgba(0,20,40,0.065);"></div>
<div class="r" style="left:1019px;top:579px;width:1px;height:27px;background:rgba(0,20,40,0.065);"></div>
<div class="r" style="left:1154px;top:579px;width:1px;height:27px;background:rgba(0,20,40,0.065);"></div>
<div class="r" style="left:1289px;top:579px;width:1px;height:27px;background:rgba(0,20,40,0.065);"></div>
<div class="r" style="left:1357px;top:579px;width:1px;height:27px;background:rgba(0,20,40,0.065);"></div>
<div class="r" style="left:1424px;top:579px;width:1px;height:27px;background:rgba(0,20,40,0.065);"></div>
<div class="r" style="left:1492px;top:579px;width:1px;height:27px;background:rgba(0,20,40,0.065);"></div>
<div class="t" style="left:216.90px;top:586.72px;font-size:12.5px;line-height:12.5px;font-weight:normal;color:#2e2e2e;transform:scaleX(0.8626);">Odessa</div>
<div class="t" style="left:486.60px;top:586.72px;font-size:12.5px;line-height:12.5px;font-weight:normal;color:#2e2e2e;transform:scaleX(0.8904);">Arish</div>
<div class="t" style="left:619.59px;top:586.72px;font-size:12.5px;line-height:12.5px;font-weight:normal;color:#18649f;transform:scaleX(0.9134);-webkit-text-stroke:0.25px #18649f">IRC-0012943-1</div>
<div class="t" style="left:756.60px;top:586.72px;font-size:12.5px;line-height:12.5px;font-weight:normal;color:#2e2e2e;transform:scaleX(0.8495);">Screws</div>
<div class="t" style="left:891.60px;top:586.72px;font-size:12.5px;line-height:12.5px;font-weight:normal;color:#2e2e2e;transform:scaleX(0.8738);">Green</div>
<div class="t" style="left:1026.60px;top:586.72px;font-size:12.5px;line-height:12.5px;font-weight:normal;color:#2e2e2e;transform:scaleX(0.9344);">12/01/2020</div>
<div class="t" style="left:1296.60px;top:586.72px;font-size:12.5px;line-height:12.5px;font-weight:normal;color:#2e2e2e;transform:scaleX(0.9050);">2</div>
<div class="t" style="left:1364.60px;top:586.72px;font-size:12.5px;line-height:12.5px;font-weight:normal;color:#2e2e2e;transform:scaleX(0.9050);">0</div>
<div class="t" style="left:1431.60px;top:586.72px;font-size:12.5px;line-height:12.5px;font-weight:normal;color:#2e2e2e;transform:scaleX(0.9050);">2</div>
<div class="r" style="left:210px;top:606px;width:1417px;height:27px;background:#ebf2f6;"></div>
<div class="r" style="left:344px;top:606px;width:1px;height:27px;background:rgba(0,20,40,0.065);"></div>
<div class="r" style="left:479px;top:606px;width:1px;height:27px;background:rgba(0,20,40,0.065);"></div>
<div class="r" style="left:614px;top:606px;width:1px;height:27px;background:rgba(0,20,40,0.065);"></div>
<div class="r" style="left:749px;top:606px;width:1px;height:27px;background:rgba(0,20,40,0.065);"></div>
<div class="r" style="left:884px;top:606px;width:1px;height:27px;background:rgba(0,20,40,0.065);"></div>
<div class="r" style="left:1019px;top:606px;width:1px;height:27px;background:rgba(0,20,40,0.065);"></div>
<div class="r" style="left:1154px;top:606px;width:1px;height:27px;background:rgba(0,20,40,0.065);"></div>
<div class="r" style="left:1289px;top:606px;width:1px;height:27px;background:rgba(0,20,40,0.065);"></div>
<div class="r" style="left:1357px;top:606px;width:1px;height:27px;background:rgba(0,20,40,0.065);"></div>
<div class="r" style="left:1424px;top:606px;width:1px;height:27px;background:rgba(0,20,40,0.065);"></div>
<div class="r" style="left:1492px;top:606px;width:1px;height:27px;background:rgba(0,20,40,0.065);"></div>
<div class="t" style="left:216.90px;top:613.72px;font-size:12.5px;line-height:12.5px;font-weight:normal;color:#2e2e2e;transform:scaleX(0.8626);">Odessa</div>
<div class="t" style="left:486.60px;top:613.72px;font-size:12.5px;line-height:12.5px;font-weight:normal;color:#2e2e2e;transform:scaleX(0.8904);">Arish</div>
<div class="t" style="left:619.59px;top:613.72px;font-size:12.5px;line-height:12.5px;font-weight:normal;color:#18649f;transform:scaleX(0.9134);-webkit-text-stroke:0.25px #18649f">IRC-0012943-1</div>
<div class="t" style="left:755.69px;top:613.72px;font-size:12.5px;line-height:12.5px;font-weight:normal;color:#2e2e2e;transform:scaleX(0.9102);">Delivery Charge</div>
<div class="t" style="left:891.60px;top:613.72px;font-size:12.5px;line-height:12.5px;font-weight:normal;color:#2e2e2e;transform:scaleX(0.8738);">Green</div>
<div class="t" style="left:1026.60px;top:613.72px;font-size:12.5px;line-height:12.5px;font-weight:normal;color:#2e2e2e;transform:scaleX(0.9344);">12/01/2020</div>
<div class="t" style="left:1296.60px;top:613.72px;font-size:12.5px;line-height:12.5px;font-weight:normal;color:#2e2e2e;transform:scaleX(0.9050);">2</div>
<div class="t" style="left:1364.60px;top:613.72px;font-size:12.5px;line-height:12.5px;font-weight:normal;color:#2e2e2e;transform:scaleX(0.9050);">0</div>
<div class="t" style="left:1431.60px;top:613.72px;font-size:12.5px;line-height:12.5px;font-weight:normal;color:#2e2e2e;transform:scaleX(0.9050);">2</div>
<div class="r" style="left:344px;top:633px;width:1px;height:27px;background:rgba(0,20,40,0.065);"></div>
<div class="r" style="left:479px;top:633px;width:1px;height:27px;background:rgba(0,20,40,0.065);"></div>
<div class="r" style="left:614px;top:633px;width:1px;height:27px;background:rgba(0,20,40,0.065);"></div>
<div class="r" style="left:749px;top:633px;width:1px;height:27px;background:rgba(0,20,40,0.065);"></div>
<div class="r" style="left:884px;top:633px;width:1px;height:27px;background:rgba(0,20,40,0.065);"></div>
<div class="r" style="left:1019px;top:633px;width:1px;height:27px;background:rgba(0,20,40,0.065);"></div>
<div class="r" style="left:1154px;top:633px;width:1px;height:27px;background:rgba(0,20,40,0.065);"></div>
<div class="r" style="left:1289px;top:633px;width:1px;height:27px;background:rgba(0,20,40,0.065);"></div>
<div class="r" style="left:1357px;top:633px;width:1px;height:27px;background:rgba(0,20,40,0.065);"></div>
<div class="r" style="left:1424px;top:633px;width:1px;height:27px;background:rgba(0,20,40,0.065);"></div>
<div class="r" style="left:1492px;top:633px;width:1px;height:27px;background:rgba(0,20,40,0.065);"></div>
<div class="t" style="left:216.90px;top:640.72px;font-size:12.5px;line-height:12.5px;font-weight:normal;color:#2e2e2e;transform:scaleX(0.8626);">Odessa</div>
<div class="t" style="left:486.60px;top:640.72px;font-size:12.5px;line-height:12.5px;font-weight:normal;color:#2e2e2e;transform:scaleX(0.8904);">Arish</div>
<div class="t" style="left:619.59px;top:640.72px;font-size:12.5px;line-height:12.5px;font-weight:normal;color:#18649f;transform:scaleX(0.9134);-webkit-text-stroke:0.25px #18649f">IRC-0012943-1</div>
<div class="t" style="left:756.60px;top:640.72px;font-size:12.5px;line-height:12.5px;font-weight:normal;color:#2e2e2e;transform:scaleX(0.8831);">0316</div>
<div class="t" style="left:891.60px;top:640.72px;font-size:12.5px;line-height:12.5px;font-weight:normal;color:#2e2e2e;transform:scaleX(0.8738);">Green</div>
<div class="t" style="left:1026.60px;top:640.72px;font-size:12.5px;line-height:12.5px;font-weight:normal;color:#2e2e2e;transform:scaleX(0.9344);">12/01/2020</div>
<div class="t" style="left:1296.60px;top:640.72px;font-size:12.5px;line-height:12.5px;font-weight:normal;color:#2e2e2e;transform:scaleX(0.9050);">7</div>
<div class="t" style="left:1364.60px;top:640.72px;font-size:12.5px;line-height:12.5px;font-weight:normal;color:#2e2e2e;transform:scaleX(0.9050);">0</div>
<div class="t" style="left:1431.60px;top:640.72px;font-size:12.5px;line-height:12.5px;font-weight:normal;color:#2e2e2e;transform:scaleX(0.9050);">7</div>
<div class="r" style="left:210px;top:660px;width:1417px;height:27px;background:#ebf2f6;"></div>
<div class="r" style="left:344px;top:660px;width:1px;height:27px;background:rgba(0,20,40,0.065);"></div>
<div class="r" style="left:479px;top:660px;width:1px;height:27px;background:rgba(0,20,40,0.065);"></div>
<div class="r" style="left:614px;top:660px;width:1px;height:27px;background:rgba(0,20,40,0.065);"></div>
<div class="r" style="left:749px;top:660px;width:1px;height:27px;background:rgba(0,20,40,0.065);"></div>
<div class="r" style="left:884px;top:660px;width:1px;height:27px;background:rgba(0,20,40,0.065);"></div>
<div class="r" style="left:1019px;top:660px;width:1px;height:27px;background:rgba(0,20,40,0.065);"></div>
<div class="r" style="left:1154px;top:660px;width:1px;height:27px;background:rgba(0,20,40,0.065);"></div>
<div class="r" style="left:1289px;top:660px;width:1px;height:27px;background:rgba(0,20,40,0.065);"></div>
<div class="r" style="left:1357px;top:660px;width:1px;height:27px;background:rgba(0,20,40,0.065);"></div>
<div class="r" style="left:1424px;top:660px;width:1px;height:27px;background:rgba(0,20,40,0.065);"></div>
<div class="r" style="left:1492px;top:660px;width:1px;height:27px;background:rgba(0,20,40,0.065);"></div>
<div class="t" style="left:216.90px;top:667.72px;font-size:12.5px;line-height:12.5px;font-weight:normal;color:#2e2e2e;transform:scaleX(0.8626);">Odessa</div>
<div class="t" style="left:486.60px;top:667.72px;font-size:12.5px;line-height:12.5px;font-weight:normal;color:#2e2e2e;transform:scaleX(0.8904);">Arish</div>
<div class="t" style="left:619.59px;top:667.72px;font-size:12.5px;line-height:12.5px;font-weight:normal;color:#18649f;transform:scaleX(0.9134);-webkit-text-stroke:0.25px #18649f">IRC-0012943-1</div>
<div class="t" style="left:755.69px;top:667.72px;font-size:12.5px;line-height:12.5px;font-weight:normal;color:#2e2e2e;transform:scaleX(0.9127);">Little Bag</div>
<div class="t" style="left:891.60px;top:667.72px;font-size:12.5px;line-height:12.5px;font-weight:normal;color:#2e2e2e;transform:scaleX(0.8738);">Green</div>
<div class="t" style="left:1026.60px;top:667.72px;font-size:12.5px;line-height:12.5px;font-weight:normal;color:#2e2e2e;transform:scaleX(0.9344);">12/01/2020</div>
<div class="t" style="left:1296.60px;top:667.72px;font-size:12.5px;line-height:12.5px;font-weight:normal;color:#2e2e2e;transform:scaleX(0.9050);">8</div>
<div class="t" style="left:1364.60px;top:667.72px;font-size:12.5px;line-height:12.5px;font-weight:normal;color:#2e2e2e;transform:scaleX(0.9050);">0</div>
<div class="t" style="left:1431.60px;top:667.72px;font-size:12.5px;line-height:12.5px;font-weight:normal;color:#2e2e2e;transform:scaleX(0.9050);">8</div>
<div class="r" style="left:344px;top:687px;width:1px;height:27px;background:rgba(0,20,40,0.065);"></div>
<div class="r" style="left:479px;top:687px;width:1px;height:27px;background:rgba(0,20,40,0.065);"></div>
<div class="r" style="left:614px;top:687px;width:1px;height:27px;background:rgba(0,20,40,0.065);"></div>
<div class="r" style="left:749px;top:687px;width:1px;height:27px;background:rgba(0,20,40,0.065);"></div>
<div class="r" style="left:884px;top:687px;width:1px;height:27px;background:rgba(0,20,40,0.065);"></div>
<div class="r" style="left:1019px;top:687px;width:1px;height:27px;background:rgba(0,20,40,0.065);"></div>
<div class="r" style="left:1154px;top:687px;width:1px;height:27px;background:rgba(0,20,40,0.065);"></div>
<div class="r" style="left:1289px;top:687px;width:1px;height:27px;background:rgba(0,20,40,0.065);"></div>
<div class="r" style="left:1357px;top:687px;width:1px;height:27px;background:rgba(0,20,40,0.065);"></div>
<div class="r" style="left:1424px;top:687px;width:1px;height:27px;background:rgba(0,20,40,0.065);"></div>
<div class="r" style="left:1492px;top:687px;width:1px;height:27px;background:rgba(0,20,40,0.065);"></div>
<div class="t" style="left:216.90px;top:695.72px;font-size:12.5px;line-height:12.5px;font-weight:normal;color:#2e2e2e;transform:scaleX(0.8626);">Odessa</div>
<div class="t" style="left:486.60px;top:695.72px;font-size:12.5px;line-height:12.5px;font-weight:normal;color:#2e2e2e;transform:scaleX(0.8904);">Arish</div>
<div class="t" style="left:619.59px;top:695.72px;font-size:12.5px;line-height:12.5px;font-weight:normal;color:#18649f;transform:scaleX(0.9134);-webkit-text-stroke:0.25px #18649f">IRC-0012970-1</div>
<div class="t" style="left:755.69px;top:695.72px;font-size:12.5px;line-height:12.5px;font-weight:normal;color:#2e2e2e;transform:scaleX(0.9127);">Little Bag</div>
<div class="t" style="left:1026.60px;top:695.72px;font-size:12.5px;line-height:12.5px;font-weight:normal;color:#2e2e2e;transform:scaleX(0.9344);">12/02/2020</div>
<div class="t" style="left:1296.60px;top:695.72px;font-size:12.5px;line-height:12.5px;font-weight:normal;color:#2e2e2e;transform:scaleX(0.9050);">23</div>
<div class="t" style="left:1364.60px;top:695.72px;font-size:12.5px;line-height:12.5px;font-weight:normal;color:#2e2e2e;transform:scaleX(0.9050);">21</div>
<div class="t" style="left:1431.60px;top:695.72px;font-size:12.5px;line-height:12.5px;font-weight:normal;color:#2e2e2e;transform:scaleX(0.9050);">2</div>
<div class="r" style="left:210px;top:714px;width:1417px;height:27px;background:#ebf2f6;"></div>
<div class="r" style="left:344px;top:714px;width:1px;height:27px;background:rgba(0,20,40,0.065);"></div>
<div class="r" style="left:479px;top:714px;width:1px;height:27px;background:rgba(0,20,40,0.065);"></div>
<div class="r" style="left:614px;top:714px;width:1px;height:27px;background:rgba(0,20,40,0.065);"></div>
<div class="r" style="left:749px;top:714px;width:1px;height:27px;background:rgba(0,20,40,0.065);"></div>
<div class="r" style="left:884px;top:714px;width:1px;height:27px;background:rgba(0,20,40,0.065);"></div>
<div class="r" style="left:1019px;top:714px;width:1px;height:27px;background:rgba(0,20,40,0.065);"></div>
<div class="r" style="left:1154px;top:714px;width:1px;height:27px;background:rgba(0,20,40,0.065);"></div>
<div class="r" style="left:1289px;top:714px;width:1px;height:27px;background:rgba(0,20,40,0.065);"></div>
<div class="r" style="left:1357px;top:714px;width:1px;height:27px;background:rgba(0,20,40,0.065);"></div>
<div class="r" style="left:1424px;top:714px;width:1px;height:27px;background:rgba(0,20,40,0.065);"></div>
<div class="r" style="left:1492px;top:714px;width:1px;height:27px;background:rgba(0,20,40,0.065);"></div>
<div class="t" style="left:216.90px;top:722.72px;font-size:12.5px;line-height:12.5px;font-weight:normal;color:#2e2e2e;transform:scaleX(0.8626);">Odessa</div>
<div class="t" style="left:486.60px;top:722.72px;font-size:12.5px;line-height:12.5px;font-weight:normal;color:#2e2e2e;transform:scaleX(0.8904);">Arish</div>
<div class="t" style="left:619.60px;top:722.72px;font-size:12.5px;line-height:12.5px;font-weight:normal;color:#18649f;transform:scaleX(0.8983);-webkit-text-stroke:0.25px #18649f">IRC-0011384</div>
<div class="t" style="left:756.60px;top:722.72px;font-size:12.5px;line-height:12.5px;font-weight:normal;color:#2e2e2e;transform:scaleX(0.9151);">Apple</div>
<div class="t" style="left:891.60px;top:722.72px;font-size:12.5px;line-height:12.5px;font-weight:normal;color:#2e2e2e;transform:scaleX(0.8738);">Green</div>
<div class="t" style="left:1026.60px;top:722.72px;font-size:12.5px;line-height:12.5px;font-weight:normal;color:#2e2e2e;transform:scaleX(0.9344);">12/07/2020</div>
<div class="t" style="left:1296.60px;top:722.72px;font-size:12.5px;line-height:12.5px;font-weight:normal;color:#2e2e2e;transform:scaleX(0.9050);">80</div>
<div class="t" style="left:1364.60px;top:722.72px;font-size:12.5px;line-height:12.5px;font-weight:normal;color:#2e2e2e;transform:scaleX(0.9050);">25</div>
<div class="t" style="left:1431.60px;top:722.72px;font-size:12.5px;line-height:12.5px;font-weight:normal;color:#2e2e2e;transform:scaleX(0.9050);">55</div>
<div class="r" style="left:344px;top:741px;width:1px;height:27px;background:rgba(0,20,40,0.065);"></div>
<div class="r" style="left:479px;top:741px;width:1px;height:27px;background:rgba(0,20,40,0.065);"></div>
<div class="r" style="left:614px;top:741px;width:1px;height:27px;background:rgba(0,20,40,0.065);"></div>
<div class="r" style="left:749px;top:741px;width:1px;height:27px;background:rgba(0,20,40,0.065);"></div>
<div class="r" style="left:884px;top:741px;width:1px;height:27px;background:rgba(0,20,40,0.065);"></div>
<div class="r" style="left:1019px;top:741px;width:1px;height:27px;background:rgba(0,20,40,0.065);"></div>
<div class="r" style="left:1154px;top:741px;width:1px;height:27px;background:rgba(0,20,40,0.065);"></div>
<div class="r" style="left:1289px;top:741px;width:1px;height:27px;background:rgba(0,20,40,0.065);"></div>
<div class="r" style="left:1357px;top:741px;width:1px;height:27px;background:rgba(0,20,40,0.065);"></div>
<div class="r" style="left:1424px;top:741px;width:1px;height:27px;background:rgba(0,20,40,0.065);"></div>
<div class="r" style="left:1492px;top:741px;width:1px;height:27px;background:rgba(0,20,40,0.065);"></div>
<div class="t" style="left:216.90px;top:749.72px;font-size:12.5px;line-height:12.5px;font-weight:normal;color:#2e2e2e;transform:scaleX(0.8626);">Odessa</div>
<div class="t" style="left:486.60px;top:749.72px;font-size:12.5px;line-height:12.5px;font-weight:normal;color:#2e2e2e;transform:scaleX(0.8964);">Vendor 1</div>
<div class="t" style="left:619.61px;top:749.72px;font-size:12.5px;line-height:12.5px;font-weight:normal;color:#18649f;transform:scaleX(0.8869);-webkit-text-stroke:0.25px #18649f">IRC-0013145</div>
<div class="t" style="left:755.67px;top:749.72px;font-size:12.5px;line-height:12.5px;font-weight:normal;color:#2e2e2e;transform:scaleX(0.9265);">Item 1</div>
<div class="t" style="left:890.65px;top:749.72px;font-size:12.5px;line-height:12.5px;font-weight:normal;color:#2e2e2e;transform:scaleX(0.9507);">Description for the Item</div>
<div class="t" style="left:1026.60px;top:749.72px;font-size:12.5px;line-height:12.5px;font-weight:normal;color:#2e2e2e;transform:scaleX(0.9344);">12/10/2020</div>
<div class="t" style="left:1296.60px;top:749.72px;font-size:12.5px;line-height:12.5px;font-weight:normal;color:#2e2e2e;transform:scaleX(0.9050);">3</div>
<div class="t" style="left:1364.60px;top:749.72px;font-size:12.5px;line-height:12.5px;font-weight:normal;color:#2e2e2e;transform:scaleX(0.9050);">0</div>
<div class="t" style="left:1431.60px;top:749.72px;font-size:12.5px;line-height:12.5px;font-weight:normal;color:#2e2e2e;transform:scaleX(0.9050);">3</div>
<div class="r" style="left:210px;top:768px;width:1417px;height:2px;background:#6ea5c9;"></div>
<div class="r" style="left:210px;top:796px;width:1417px;height:2px;background:#5d98c2;"></div>
<div class="r" style="left:344px;top:770px;width:1px;height:26px;background:rgba(0,20,40,0.065);"></div>
<div class="r" style="left:479px;top:770px;width:1px;height:26px;background:rgba(0,20,40,0.065);"></div>
<div class="r" style="left:614px;top:770px;width:1px;height:26px;background:rgba(0,20,40,0.065);"></div>
<div class="r" style="left:749px;top:770px;width:1px;height:26px;background:rgba(0,20,40,0.065);"></div>
<div class="r" style="left:884px;top:770px;width:1px;height:26px;background:rgba(0,20,40,0.065);"></div>
<div class="r" style="left:1019px;top:770px;width:1px;height:26px;background:rgba(0,20,40,0.065);"></div>
<div class="r" style="left:1154px;top:770px;width:1px;height:26px;background:rgba(0,20,40,0.065);"></div>
<div class="r" style="left:1289px;top:770px;width:1px;height:26px;background:rgba(0,20,40,0.065);"></div>
<div class="r" style="left:1357px;top:770px;width:1px;height:26px;background:rgba(0,20,40,0.065);"></div>
<div class="r" style="left:1424px;top:770px;width:1px;height:26px;background:rgba(0,20,40,0.065);"></div>
<div class="r" style="left:1492px;top:770px;width:1px;height:26px;background:rgba(0,20,40,0.065);"></div>
<div class="t" style="left:216.90px;top:777.62px;font-size:12.5px;line-height:12.5px;font-weight:normal;color:#2e2e2e;transform:scaleX(0.8626);">Odessa</div>
<div class="t" style="left:486.60px;top:777.62px;font-size:12.5px;line-height:12.5px;font-weight:normal;color:#2e2e2e;transform:scaleX(0.8964);">Vendor 1</div>
<div class="t" style="left:619.61px;top:777.62px;font-size:12.5px;line-height:12.5px;font-weight:normal;color:#18649f;transform:scaleX(0.8869);-webkit-text-stroke:0.25px #18649f">IRC-0013145</div>
<div class="t" style="left:755.67px;top:777.62px;font-size:12.5px;line-height:12.5px;font-weight:normal;color:#2e2e2e;transform:scaleX(0.9265);">Item 2</div>
<div class="t" style="left:890.65px;top:777.62px;font-size:12.5px;line-height:12.5px;font-weight:normal;color:#2e2e2e;transform:scaleX(0.9507);">Description for the Item</div>
<div class="t" style="left:1026.60px;top:777.62px;font-size:12.5px;line-height:12.5px;font-weight:normal;color:#2e2e2e;transform:scaleX(0.9344);">12/10/2020</div>
<div class="t" style="left:1296.60px;top:777.62px;font-size:12.5px;line-height:12.5px;font-weight:normal;color:#2e2e2e;transform:scaleX(0.9050);">1</div>
<div class="t" style="left:1364.60px;top:777.62px;font-size:12.5px;line-height:12.5px;font-weight:normal;color:#2e2e2e;transform:scaleX(0.9050);">0</div>
<div class="t" style="left:1431.60px;top:777.62px;font-size:12.5px;line-height:12.5px;font-weight:normal;color:#2e2e2e;transform:scaleX(0.9050);">1</div>
<div class="t" style="left:1500.00px;top:778.62px;font-size:12.5px;line-height:12.5px;font-weight:normal;color:#222;transform:scaleX(0.9200);">1</div>
<div class="r" style="left:344px;top:798px;width:1px;height:26px;background:rgba(0,20,40,0.065);"></div>
<div class="r" style="left:479px;top:798px;width:1px;height:26px;background:rgba(0,20,40,0.065);"></div>
<div class="r" style="left:614px;top:798px;width:1px;height:26px;background:rgba(0,20,40,0.065);"></div>
<div class="r" style="left:749px;top:798px;width:1px;height:26px;background:rgba(0,20,40,0.065);"></div>
<div class="r" style="left:884px;top:798px;width:1px;height:26px;background:rgba(0,20,40,0.065);"></div>
<div class="r" style="left:1019px;top:798px;width:1px;height:26px;background:rgba(0,20,40,0.065);"></div>
<div class="r" style="left:1154px;top:798px;width:1px;height:26px;background:rgba(0,20,40,0.065);"></div>
<div class="r" style="left:1289px;top:798px;width:1px;height:26px;background:rgba(0,20,40,0.065);"></div>
<div class="r" style="left:1357px;top:798px;width:1px;height:26px;background:rgba(0,20,40,0.065);"></div>
<div class="r" style="left:1424px;top:798px;width:1px;height:26px;background:rgba(0,20,40,0.065);"></div>
<div class="r" style="left:1492px;top:798px;width:1px;height:26px;background:rgba(0,20,40,0.065);"></div>
<div class="t" style="left:216.90px;top:805.62px;font-size:12.5px;line-height:12.5px;font-weight:normal;color:#2e2e2e;transform:scaleX(0.8626);">Odessa</div>
<div class="t" style="left:486.60px;top:805.62px;font-size:12.5px;line-height:12.5px;font-weight:normal;color:#2e2e2e;transform:scaleX(0.8964);">Vendor 1</div>
<div class="t" style="left:619.61px;top:805.62px;font-size:12.5px;line-height:12.5px;font-weight:normal;color:#18649f;transform:scaleX(0.8869);-webkit-text-stroke:0.25px #18649f">IRC-0013145</div>
<div class="t" style="left:755.67px;top:805.62px;font-size:12.5px;line-height:12.5px;font-weight:normal;color:#2e2e2e;transform:scaleX(0.9265);">Item 3</div>
<div class="t" style="left:890.65px;top:805.62px;font-size:12.5px;line-height:12.5px;font-weight:normal;color:#2e2e2e;transform:scaleX(0.9507);">Description for the Item</div>
<div class="t" style="left:1026.60px;top:805.62px;font-size:12.5px;line-height:12.5px;font-weight:normal;color:#2e2e2e;transform:scaleX(0.9344);">12/10/2020</div>
<div class="t" style="left:1296.60px;top:805.62px;font-size:12.5px;line-height:12.5px;font-weight:normal;color:#2e2e2e;transform:scaleX(0.9050);">1</div>
<div class="t" style="left:1364.60px;top:805.62px;font-size:12.5px;line-height:12.5px;font-weight:normal;color:#2e2e2e;transform:scaleX(0.9050);">0</div>
<div class="t" style="left:1431.60px;top:805.62px;font-size:12.5px;line-height:12.5px;font-weight:normal;color:#2e2e2e;transform:scaleX(0.9050);">1</div>
</body></html>
